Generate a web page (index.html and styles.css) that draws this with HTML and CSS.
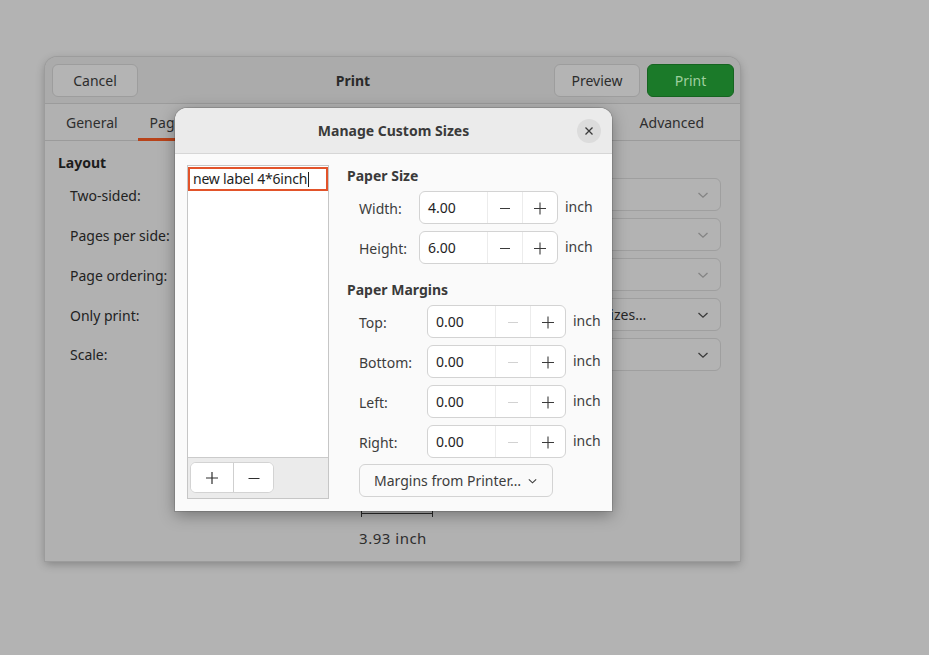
FILE: index.html
```html
<!DOCTYPE html>
<html>
<head>
<meta charset="utf-8">
<title>Print</title>
<link rel="stylesheet" href="styles.css">
</head>
<body>
<div class="print-win">
  <header class="print-head">
    <button class="btn">Cancel</button>
    <div class="print-title">Print</div>
    <div class="head-actions">
      <button class="btn">Preview</button>
      <button class="btn btn-print">Print</button>
    </div>
  </header>
  <nav class="tabs">
    <span class="tab">General</span>
    <span class="tab active">Page Setup</span>
    <span class="tab">Job</span>
    <span class="tab">Image Quality</span>
    <span class="tab">Color</span>
    <span class="tab tab-last">Advanced</span>
  </nav>
  <div class="page-setup">
    <div class="cols">
      <section class="col col-layout">
        <h3 class="sec-title">Layout</h3>
        <div class="row"><span class="lbl">Two-sided:</span></div>
        <div class="row"><span class="lbl">Pages per side:</span></div>
        <div class="row"><span class="lbl">Page ordering:</span></div>
        <div class="row"><span class="lbl">Only print:</span></div>
        <div class="row row-scale"><span class="lbl">Scale:</span></div>
      </section>
      <section class="col col-paper">
        <h3 class="sec-title">Paper</h3>
        <div class="row"><span class="lbl">Paper type:</span><div class="combo dim"><span></span><svg class="chev" viewBox="0 0 12 8"><path d="M1.5 2 6 6.2 10.5 2"/></svg></div></div>
        <div class="row"><span class="lbl">Paper source:</span><div class="combo dim"><span></span><svg class="chev" viewBox="0 0 12 8"><path d="M1.5 2 6 6.2 10.5 2"/></svg></div></div>
        <div class="row"><span class="lbl">Output tray:</span><div class="combo dim"><span></span><svg class="chev" viewBox="0 0 12 8"><path d="M1.5 2 6 6.2 10.5 2"/></svg></div></div>
        <div class="row"><span class="lbl">Paper size:</span><div class="combo"><span>Manage Custom Sizes…</span><svg class="chev" viewBox="0 0 12 8"><path d="M1.5 2 6 6.2 10.5 2"/></svg></div></div>
        <div class="row"><span class="lbl">Orientation:</span><div class="combo"><span>Portrait</span><svg class="chev" viewBox="0 0 12 8"><path d="M1.5 2 6 6.2 10.5 2"/></svg></div></div>
      </section>
    </div>
    <div class="preview">
      <svg class="preview-art" width="100" height="30" viewBox="0 0 100 30">
        <line x1="12.5" y1="0" x2="12.5" y2="8" stroke="#2a2a2a" stroke-width="1"/>
        <line x1="9" y1="7.5" x2="13" y2="7.5" stroke="#2a2a2a" stroke-width="1"/>
        <rect x="18.5" y="-20" width="71" height="27.5" fill="#c9c9c9" stroke="#2a2a2a" stroke-width="1"/>
        <line x1="20" y1="6" x2="88" y2="6" stroke="#3a3a3a" stroke-width="2"/>
        <line x1="18.5" y1="17.5" x2="89.5" y2="17.5" stroke="#2a2a2a" stroke-width="1"/>
        <line x1="18.5" y1="14" x2="18.5" y2="21" stroke="#2a2a2a" stroke-width="1"/>
        <line x1="89.5" y1="14" x2="89.5" y2="21" stroke="#2a2a2a" stroke-width="1"/>
      </svg>
      <div class="preview-cap">3.93 inch</div>
    </div>
  </div>

  <div class="custom-dlg">
    <header class="dlg-head">
      <div class="dlg-title">Manage Custom Sizes</div>
      <button class="dlg-close" aria-label="Close">
        <svg viewBox="0 0 10 10" width="10" height="10"><path d="M1.5 1.5 8.5 8.5M8.5 1.5 1.5 8.5"/></svg>
      </button>
    </header>
    <div class="dlg-body">
      <div class="size-list">
        <div class="list-items">
          <div class="name-edit">new label 4*6inch<span class="caret"></span></div>
        </div>
        <div class="list-tools">
          <div class="linked">
            <button class="tool-btn"><svg viewBox="0 0 14 14" width="14" height="14"><path d="M7 1v12M1 7h12"/></svg></button>
            <button class="tool-btn"><svg viewBox="0 0 14 14" width="14" height="14"><path d="M1.5 7.5h11"/></svg></button>
          </div>
        </div>
      </div>
      <div class="size-form">
        <h4 class="grp-title">Paper Size</h4>
        <div class="grp grp-size">
          <span class="f-lbl">Width:</span>
          <div class="spin"><span class="spin-val">4.00</span><span class="spin-btn"><svg viewBox="0 0 14 14"><path d="M2 7.5h10"/></svg></span><span class="spin-btn"><svg viewBox="0 0 14 14"><path d="M7 1.5v12M1 7.5h12"/></svg></span></div>
          <span class="unit">inch</span>
          <span class="f-lbl">Height:</span>
          <div class="spin"><span class="spin-val">6.00</span><span class="spin-btn"><svg viewBox="0 0 14 14"><path d="M2 7.5h10"/></svg></span><span class="spin-btn"><svg viewBox="0 0 14 14"><path d="M7 1.5v12M1 7.5h12"/></svg></span></div>
          <span class="unit">inch</span>
        </div>
        <h4 class="grp-title grp-title-2">Paper Margins</h4>
        <div class="grp grp-margins">
          <span class="f-lbl">Top:</span>
          <div class="spin"><span class="spin-val">0.00</span><span class="spin-btn off"><svg viewBox="0 0 14 14"><path d="M2 7.5h10"/></svg></span><span class="spin-btn"><svg viewBox="0 0 14 14"><path d="M7 1.5v12M1 7.5h12"/></svg></span></div>
          <span class="unit">inch</span>
          <span class="f-lbl">Bottom:</span>
          <div class="spin"><span class="spin-val">0.00</span><span class="spin-btn off"><svg viewBox="0 0 14 14"><path d="M2 7.5h10"/></svg></span><span class="spin-btn"><svg viewBox="0 0 14 14"><path d="M7 1.5v12M1 7.5h12"/></svg></span></div>
          <span class="unit">inch</span>
          <span class="f-lbl">Left:</span>
          <div class="spin"><span class="spin-val">0.00</span><span class="spin-btn off"><svg viewBox="0 0 14 14"><path d="M2 7.5h10"/></svg></span><span class="spin-btn"><svg viewBox="0 0 14 14"><path d="M7 1.5v12M1 7.5h12"/></svg></span></div>
          <span class="unit">inch</span>
          <span class="f-lbl">Right:</span>
          <div class="spin"><span class="spin-val">0.00</span><span class="spin-btn off"><svg viewBox="0 0 14 14"><path d="M2 7.5h10"/></svg></span><span class="spin-btn"><svg viewBox="0 0 14 14"><path d="M7 1.5v12M1 7.5h12"/></svg></span></div>
          <span class="unit">inch</span>
        </div>
        <button class="menu-btn">Margins from Printer… <svg class="chev-sm" viewBox="0 0 12 8"><path d="M2 2.2 6 6 10 2.2"/></svg></button>
      </div>
    </div>
  </div>
</div>
</body>
</html>
```

FILE: styles.css
```css
* { box-sizing: border-box; }

html, body { height: 100%; }

body {
  margin: 0;
  padding: 57px 0 0 45px;
  background: #b3b3b3;
  font-family: "Noto Sans", "Open Sans", sans-serif;
  font-size: 14px;
  color: #262626;
}

button {
  font: inherit;
  color: inherit;
  margin: 0;
  padding: 0;
  cursor: default;
}

/* ---- Print window (dimmed behind the modal) ---- */
.print-win {
  position: relative;
  width: 695px;
  height: 504px;
  background: #b1b1b1;
  border-radius: 12px 12px 0 0;
  box-shadow: 0 0 0 1px #9c9c9c, 0 3px 10px rgba(0, 0, 0, 0.28);
  display: flex;
  flex-direction: column;
}

.print-head {
  height: 47px;
  flex: none;
  display: flex;
  align-items: center;
  padding: 0 6px 0 7px;
  background: #ababab;
  border-radius: 12px 12px 0 0;
  border-bottom: 1px solid #9b9b9b;
}

.btn {
  height: 33px;
  width: 86px;
  border: 1px solid #9d9d9d;
  border-radius: 6px;
  background: #b4b4b4;
  color: #2c2c2c;
}

.print-title {
  flex: 1;
  text-align: center;
  font-weight: 700;
  color: #2a2a2a;
  padding-left: 14px;
}

.head-actions { display: flex; gap: 7px; }

.btn-print {
  width: 87px;
  background: #1b7a29;
  border-color: #156420;
  color: #9fcf9f;
}

.tabs {
  height: 37px;
  flex: none;
  display: flex;
  align-items: stretch;
  padding: 0 20px 0 5px;
  border-bottom: 1px solid #9b9b9b;
}

.tab {
  display: flex;
  align-items: center;
  padding: 0 16px;
  color: #2e2e2e;
  position: relative;
}

.tab.active::after {
  content: "";
  position: absolute;
  left: 4px;
  right: 4px;
  bottom: -1px;
  height: 3px;
  background: #b8431a;
}

.tab-last { margin-left: auto; }

.page-setup {
  flex: 1;
  padding: 12px 19px 0 13px;
  display: flex;
  flex-direction: column;
}

.cols {
  display: flex;
  gap: 20px;
}

.col-layout { width: 300px; }
.col-paper { flex: 1; }

.sec-title {
  margin: 0 0 5px;
  font-size: 14px;
  font-weight: 700;
  color: #1c1c1c;
  height: 20px;
  line-height: 20px;
}

.row {
  height: 33px;
  margin-bottom: 7px;
  display: flex;
  align-items: center;
  padding-left: 12px;
  gap: 12px;
}

.row-scale { height: 31px; }

.lbl { color: #222; padding-top: 2px; }

.col-paper .lbl { width: 77px; flex: none; overflow: hidden; white-space: nowrap; }

.combo {
  flex: 1;
  height: 33px;
  border: 1px solid #9f9f9f;
  border-radius: 6px;
  background: #b3b3b3;
  display: flex;
  align-items: center;
  justify-content: space-between;
  padding: 0 11px 0 11px;
  color: #262626;
}

.chev {
  width: 12px;
  height: 8px;
  fill: none;
  stroke: #3a3a3a;
  stroke-width: 1.3;
}

.combo.dim .chev { stroke: #848484; }

.preview {
  margin-top: auto;
  margin-bottom: 13px;
  align-self: center;
  display: flex;
  flex-direction: column;
  align-items: center;
  transform: translateX(-3px);
}

.preview-art { display: block; margin-left: 13px; }

.preview-cap {
  color: #2e2e2e;
  font-size: 15px;
  letter-spacing: 0.5px;
  margin-left: 13px;
  margin-top: 2px;
  line-height: 20px;
}

/* ---- Manage Custom Sizes modal ---- */
.custom-dlg {
  position: absolute;
  left: 130px;
  top: 51px;
  width: 437px;
  height: 403px;
  background: #fafafa;
  border-radius: 12px 12px 0 0;
  box-shadow: 0 0 0 1px rgba(0, 0, 0, 0.12), 0 4px 16px rgba(0, 0, 0, 0.35);
  display: flex;
  flex-direction: column;
  color: #3d3d3d;
}

.dlg-head {
  height: 46px;
  flex: none;
  background: #ebebeb;
  border-radius: 12px 12px 0 0;
  border-bottom: 1px solid #d6d6d6;
  display: flex;
  align-items: center;
  position: relative;
}

.dlg-title {
  flex: 1;
  text-align: center;
  font-weight: 700;
  color: #3a3a3a;
}

.dlg-close {
  position: absolute;
  right: 11px;
  top: 11px;
  width: 24px;
  height: 24px;
  border: 0;
  border-radius: 50%;
  background: #dcdcdc;
  display: flex;
  align-items: center;
  justify-content: center;
}

.dlg-close svg { fill: none; stroke: #3a3a3a; stroke-width: 1.3; }

.dlg-body {
  flex: 1;
  display: flex;
  padding: 11px 0 12px 12px;
  gap: 18px;
}

.size-list {
  width: 142px;
  border: 1px solid #c6c6c6;
  display: flex;
  flex-direction: column;
  background: #fff;
}

.list-items { flex: 1; padding: 1px 0 0 0; }

.name-edit {
  height: 24px;
  border: 2px solid #e2532a;
  padding: 0 0 0 3px;
  line-height: 20px;
  color: #1e1e1e;
  white-space: nowrap;
  display: flex;
  align-items: center;
  letter-spacing: -0.2px;
}

.caret {
  display: inline-block;
  width: 1px;
  height: 15px;
  background: #1e1e1e;
  margin-left: 1px;
}

.list-tools {
  height: 41px;
  flex: none;
  background: #ebebeb;
  border-top: 1px solid #cbcbcb;
  padding: 4px 2px;
}

.linked {
  display: inline-flex;
  height: 31px;
  border: 1px solid #d3d3d3;
  border-radius: 6px;
  background: #fff;
  overflow: hidden;
}

.tool-btn {
  width: 42px;
  height: 100%;
  border: 0;
  background: #fff;
  display: flex;
  align-items: center;
  justify-content: center;
}

.tool-btn + .tool-btn { border-left: 1px solid #cfcfcf; width: 40px; }

.tool-btn svg { fill: none; stroke: #2e2e2e; stroke-width: 1.2; }

.size-form {
  display: flex;
  flex-direction: column;
  padding-top: 1px;
}

.grp-title {
  margin: 0;
  font-size: 14px;
  font-weight: 700;
  color: #3a3a3a;
  height: 20px;
  line-height: 20px;
  margin-bottom: 5px;
}

.grp-title-2 { margin-top: 16px; margin-bottom: 5px; }

.grp {
  display: grid;
  grid-template-columns: auto 139px auto;
  column-gap: 7px;
  row-gap: 7px;
  align-items: center;
  padding-left: 12px;
}

.grp-size { grid-template-columns: 53px 139px auto; }
.grp-margins { grid-template-columns: 61px 139px auto; }

.f-lbl { color: #3d3d3d; padding-top: 1px; }

.unit { color: #3d3d3d; padding-bottom: 3px; }

.spin {
  height: 33px;
  border: 1px solid #d3d3d3;
  border-radius: 6px;
  background: #fff;
  display: flex;
  overflow: hidden;
}

.spin-val {
  flex: 1;
  display: flex;
  align-items: center;
  padding-left: 8px;
  color: #1e1e1e;
}

.spin-btn {
  width: 35px;
  border-left: 1px solid #ececec;
  display: flex;
  align-items: center;
  justify-content: center;
}

.spin-btn svg {
  width: 14px;
  height: 14px;
  fill: none;
  stroke: #3a3a3a;
  stroke-width: 1.1;
}

.spin-btn.off svg { stroke: #d2d2d2; }

.menu-btn {
  margin: 6px 0 0 12px;
  align-self: flex-start;
  width: 194px;
  height: 33px;
  border: 1px solid #d3d3d3;
  border-radius: 6px;
  background: #fafafa;
  color: #3d3d3d;
  display: flex;
  align-items: center;
  justify-content: center;
  gap: 6px;
}

.chev-sm {
  width: 11px;
  height: 8px;
  fill: none;
  stroke: #3d3d3d;
  stroke-width: 1.2;
}
```
